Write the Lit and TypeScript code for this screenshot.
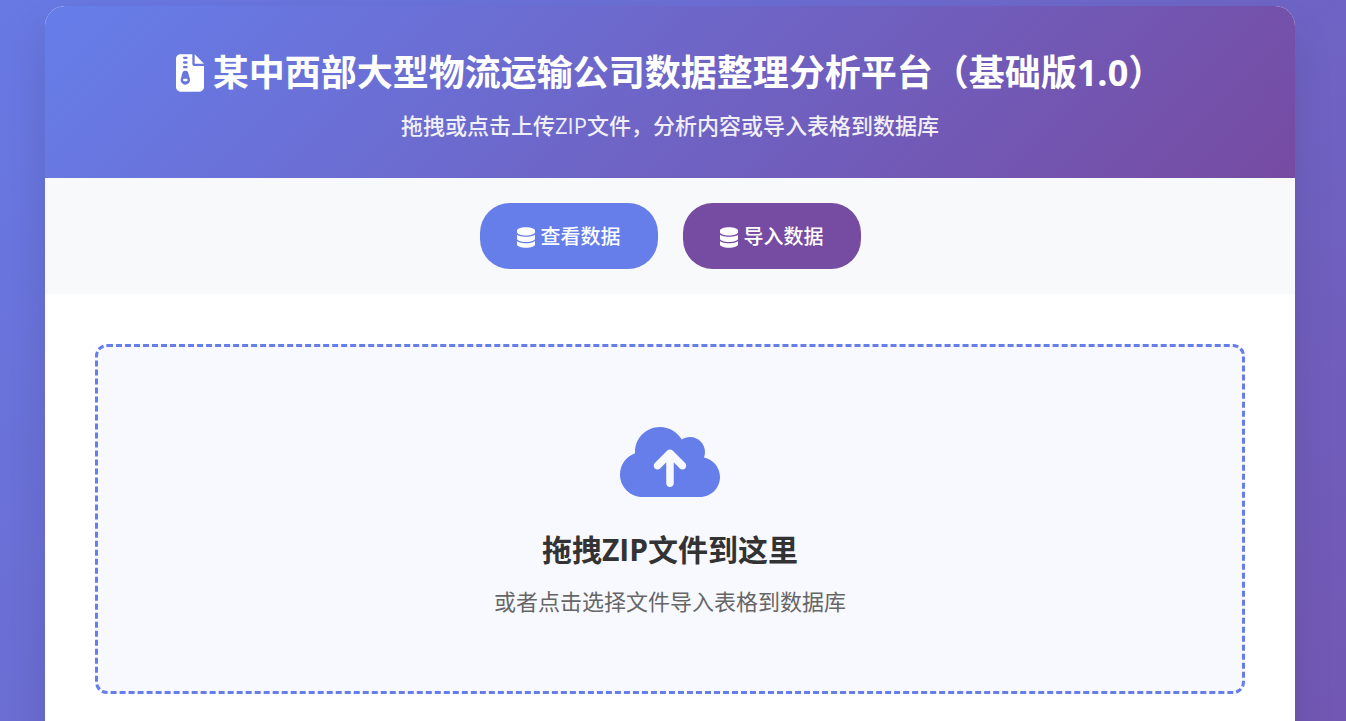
import { LitElement, html, css, svg } from "lit";
import { customElement } from "lit/decorators.js";

const fileZipper = svg`<path d="M64 0C28.7 0 0 28.7 0 64V448c0 35.3 28.7 64 64 64H320c35.3 0 64-28.7 64-64V160H256c-17.7 0-32-14.3-32-32V0H64zM256 0V128H384L256 0zM96 48c0-8.8 7.2-16 16-16h32c8.8 0 16 7.2 16 16s-7.2 16-16 16H112c-8.8 0-16-7.2-16-16zm0 64c0-8.8 7.2-16 16-16h32c8.8 0 16 7.2 16 16s-7.2 16-16 16H112c-8.8 0-16-7.2-16-16zm0 64c0-8.8 7.2-16 16-16h32c8.8 0 16 7.2 16 16s-7.2 16-16 16H112c-8.8 0-16-7.2-16-16zm-6.3 71.8c3.7-14 16.4-23.8 30.9-23.8h14.8c14.5 0 27.2 9.7 30.9 23.8l23.5 88.2c1.4 5.4 2.1 10.9 2.1 16.4c0 35.2-28.8 63.7-64 63.7s-64-28.5-64-63.7c0-5.5 .7-11.1 2.1-16.4l23.5-88.2zM112 336c-8.8 0-16 7.2-16 16s7.2 16 16 16h32c8.8 0 16-7.2 16-16s-7.2-16-16-16H112z"/>`;

const database = svg`<path d="M448 80v48c0 44.2-100.3 80-224 80S0 172.2 0 128V80C0 35.8 100.3 0 224 0S448 35.8 448 80zM393.2 214.7c20.8-7.4 39.9-16.9 54.8-28.6V288c0 44.2-100.3 80-224 80S0 332.2 0 288V186.1c14.9 11.8 34 21.2 54.8 28.6C99.7 230.7 159.5 240 224 240s124.3-9.3 169.2-25.3zM0 346.1c14.9 11.8 34 21.2 54.8 28.6C99.7 390.7 159.5 400 224 400s124.3-9.3 169.2-25.3c20.8-7.4 39.9-16.9 54.8-28.6V432c0 44.2-100.3 80-224 80S0 476.2 0 432V346.1z"/>`;

const cloudUpload = svg`<path d="M144 480C64.5 480 0 415.5 0 336c0-62.8 40.2-116.2 96.2-135.9c-.1-2.7-.2-5.4-.2-8.1c0-88.4 71.6-160 160-160c59.3 0 111 32.2 138.7 80.2C409.9 102 428.3 96 448 96c53 0 96 43 96 96c0 12.2-2.3 23.8-6.4 34.6C596 238.4 640 290.1 640 352c0 70.7-57.3 128-128 128H144zm79-217c-9.4 9.4-9.4 24.6 0 33.9s24.6 9.4 33.9 0l39-39V392c0 13.3 10.7 24 24 24s24-10.7 24-24V257.9l39 39c9.4 9.4 24.6 9.4 33.9 0s9.4-24.6 0-33.9l-80-80c-9.4-9.4-24.6-9.4-33.9 0l-80 80z"/>`;

@customElement("app-root")
export class AppRoot extends LitElement {
  static styles = css`
    :host {
      display: block;
      font-family: "Open Sans", "Noto Sans CJK SC", sans-serif;
      color: #333;
    }
    * {
      box-sizing: border-box;
    }
    .page {
      display: flex;
      justify-content: center;
      height: 100vh;
      overflow: hidden;
      padding: 6px 51px 0 45px;
      background: linear-gradient(135deg, #667eea 0%, #764ba2 100%) 0 -300px / 100% 1780px;
    }
    .card {
      flex: 1;
      max-width: 1400px;
      height: max-content;
      min-height: 120vh;
      overflow: hidden;
      border-radius: 20px;
      background: #fff;
      box-shadow: 0 20px 40px rgba(0, 0, 0, 0.1);
    }
    .header {
      padding: 40px 40px 37px;
      text-align: center;
      color: #fff;
      background: linear-gradient(135deg, #667eea 0%, #764ba2 100%);
    }
    .title {
      display: flex;
      justify-content: center;
      align-items: center;
      gap: 9px;
      margin: 0 0 9px;
      font-size: 36px;
      line-height: 54px;
      font-weight: 700;
    }
    .title svg {
      width: 28px;
      height: 38px;
    }
    svg {
      display: block;
      flex: none;
      fill: currentColor;
    }
    .subtitle {
      margin: 0;
      font-size: 22px;
      line-height: 32px;
      opacity: 0.9;
      font-weight: 500;
    }
    .actions {
      display: flex;
      justify-content: center;
      flex-wrap: wrap;
      gap: 25px;
      padding: 25px;
      background: #f8f9fa;
    }
    .button {
      display: flex;
      align-items: center;
      gap: 6px;
      padding: 19px 37px 17px;
      border: 0;
      border-radius: 30px;
      font: 500 20px/30px "Open Sans", "Noto Sans CJK SC", sans-serif;
      color: #fff;
      background: #667eea;
      cursor: pointer;
    }
    .button.import {
      background: #764ba2;
    }
    .button svg {
      width: 18px;
      height: 21px;
    }
    .main {
      padding: 50px;
    }
    .dropzone {
      display: flex;
      flex-direction: column;
      align-items: center;
      padding: 75px 40px 76px;
      border: 3px dashed #667eea;
      border-radius: 12px;
      background: #f8f9ff;
      text-align: center;
      cursor: pointer;
    }
    .dropzone svg {
      width: 100px;
      height: 80px;
      margin-bottom: 27px;
      color: #667eea;
    }
    .drop-title {
      margin-bottom: 16px;
      font-size: 30px;
      line-height: 42px;
      font-weight: 700;
    }
    .drop-hint {
      font-size: 22px;
      line-height: 28px;
      color: #666;
    }
    .file {
      position: absolute;
      width: 1px;
      height: 1px;
      opacity: 0;
    }
  `;

  render() {
    return html`
      <div class="page">
        <div class="card">
          <header class="header">
            <h1 class="title">
              <svg viewBox="0 0 384 512" aria-hidden="true">${fileZipper}</svg>
              <span>某中西部大型物流运输公司数据整理分析平台（基础版1.0）</span>
            </h1>
            <p class="subtitle">拖拽或点击上传ZIP文件，分析内容或导入表格到数据库</p>
          </header>
          <nav class="actions">
            <button class="button" type="button">
              <svg viewBox="0 0 448 512" aria-hidden="true">${database}</svg>查看数据
            </button>
            <button class="button import" type="button">
              <svg viewBox="0 0 448 512" aria-hidden="true">${database}</svg>导入数据
            </button>
          </nav>
          <main class="main">
            <label class="dropzone" for="zip-file">
              <svg viewBox="0 0 640 512" aria-hidden="true">${cloudUpload}</svg>
              <span class="drop-title">拖拽ZIP文件到这里</span>
              <span class="drop-hint">或者点击选择文件导入表格到数据库</span>
              <input class="file" id="zip-file" type="file" accept=".zip" />
            </label>
          </main>
        </div>
      </div>
    `;
  }
}
